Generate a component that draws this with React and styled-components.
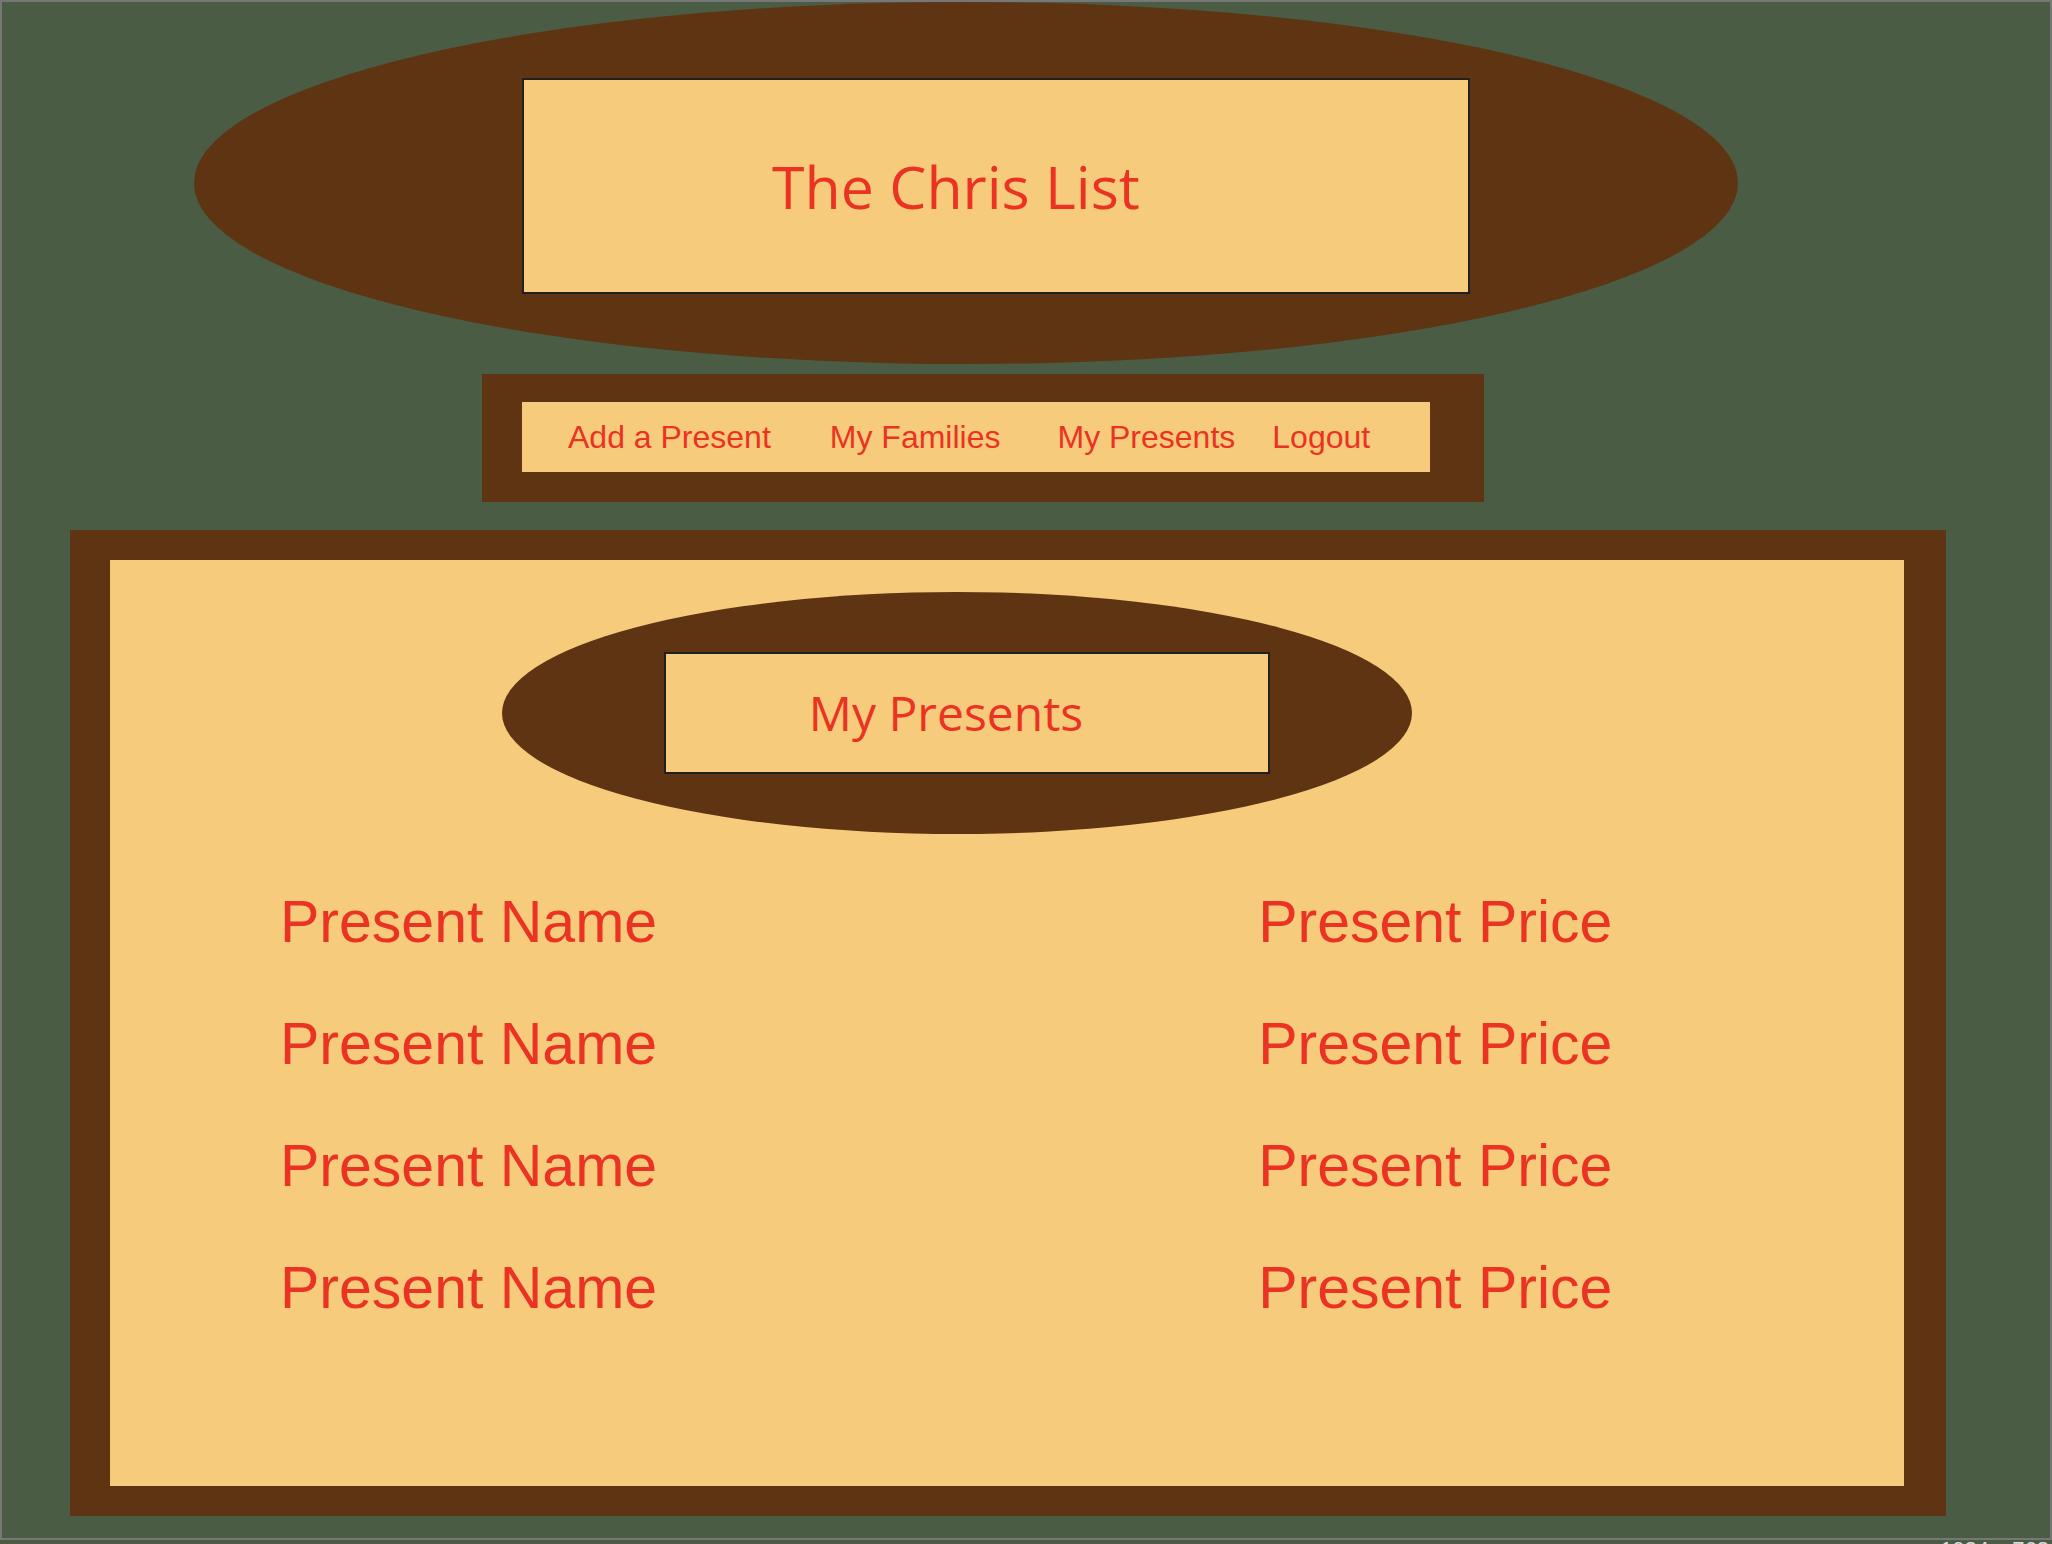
import React from "react";
import styled, { createGlobalStyle, ThemeProvider } from "styled-components";

const theme = {
  pine: "#4a5c44",
  bark: "#5e3413",
  sand: "#f6cb7c",
  berry: "#eb3323",
  ink: "#202020",
  frame: "#777777",
  sans: '"Liberation Sans", Arial, sans-serif',
  display: '"Open Sans", "Noto Sans", sans-serif',
};

const GlobalStyle = createGlobalStyle`
  *, *::before, *::after { box-sizing: border-box; }
  body {
    margin: 0;
    background: ${theme.pine};
    color: ${theme.berry};
    font-family: ${theme.sans};
  }
`;

const Page = styled.div`
  max-height: 100vh;
  overflow: hidden;
`;

const Frame = styled.div`
  border: 2px solid ${(p) => p.theme.frame};
  padding-bottom: 22px;
`;

const Oval = styled.header`
  margin: ${(p) => p.$margin};
  padding: ${(p) => p.$padding};
  background: ${(p) => p.theme.bark};
  border-radius: 50%;
`;

const Plaque = styled.div`
  display: flex;
  align-items: center;
  justify-content: center;
  min-height: ${(p) => p.$height}px;
  padding-right: ${(p) => p.$inset}px;
  border: 2px solid ${(p) => p.theme.ink};
  background: ${(p) => p.theme.sand};
`;

const Title = styled.h1`
  margin: 0;
  font: 400 ${(p) => p.$size}px / 1.2 ${(p) => p.theme.display};
  white-space: nowrap;
`;

const NavBoard = styled.nav`
  margin: 10px 566px 0 480px;
  padding: 28px 54px 30px 40px;
  background: ${(p) => p.theme.bark};
`;

const NavList = styled.ul`
  display: flex;
  align-items: center;
  min-height: 70px;
  margin: 0;
  padding: 0 0 0 46px;
  list-style: none;
  background: ${(p) => p.theme.sand};
`;

const NavItem = styled.li`
  margin-right: ${(p) => p.$gap}px;
`;

const NavLink = styled.a`
  color: inherit;
  font-size: 32px;
  line-height: 40px;
  text-decoration: none;
  white-space: nowrap;
`;

const Board = styled.main`
  margin: 28px 104px 0 68px;
  padding: 30px 42px 30px 40px;
  background: ${(p) => p.theme.bark};
`;

const BoardFace = styled.section`
  padding: 32px 0 137px;
  background: ${(p) => p.theme.sand};
`;

const Presents = styled.table`
  width: 100%;
  margin-top: 27px;
  border-collapse: collapse;
  table-layout: fixed;
`;

const Cell = styled.td`
  width: ${(p) => p.$width};
  height: 122px;
  padding: 0 0 0 ${(p) => p.$indent || 0}px;
  font-size: 59px;
  line-height: 68px;
  white-space: nowrap;
`;

const SizeNote = styled.footer`
  padding-right: 3px;
  color: #dddddd;
  font-size: 22px;
  line-height: 20px;
  text-align: right;
`;

const links = [
  { label: "Add a Present", gap: 59 },
  { label: "My Families", gap: 57 },
  { label: "My Presents", gap: 37 },
  { label: "Logout", gap: 0 },
];

const presents = Array.from({ length: 4 }, (_, id) => ({
  id,
  name: "Present Name",
  price: "Present Price",
}));

export default function App() {
  return (
    <ThemeProvider theme={theme}>
      <GlobalStyle />
      <Page>
        <Frame>
          <Oval $margin="0 312px 0 192px" $padding="76px 268px 70px 328px">
            <Plaque $height={216} $inset={80}>
              <Title $size={59}>The Chris List</Title>
            </Plaque>
          </Oval>
          <NavBoard>
            <NavList>
              {links.map((link) => (
                <NavItem key={link.label} $gap={link.gap}>
                  <NavLink href="#">{link.label}</NavLink>
                </NavItem>
              ))}
            </NavList>
          </NavBoard>
          <Board>
            <BoardFace>
              <Oval $margin="0 492px 0 392px" $padding="60px 142px 60px 162px">
                <Plaque $height={122} $inset={42}>
                  <Title as="h2" $size={48}>My Presents</Title>
                </Plaque>
              </Oval>
              <Presents>
                <tbody>
                  {presents.map((present) => (
                    <tr key={present.id}>
                      <Cell $width="64%" $indent={170}>{present.name}</Cell>
                      <Cell $width="36%">{present.price}</Cell>
                    </tr>
                  ))}
                </tbody>
              </Presents>
            </BoardFace>
          </Board>
        </Frame>
        <SizeNote>1024 x 768</SizeNote>
      </Page>
    </ThemeProvider>
  );
}
